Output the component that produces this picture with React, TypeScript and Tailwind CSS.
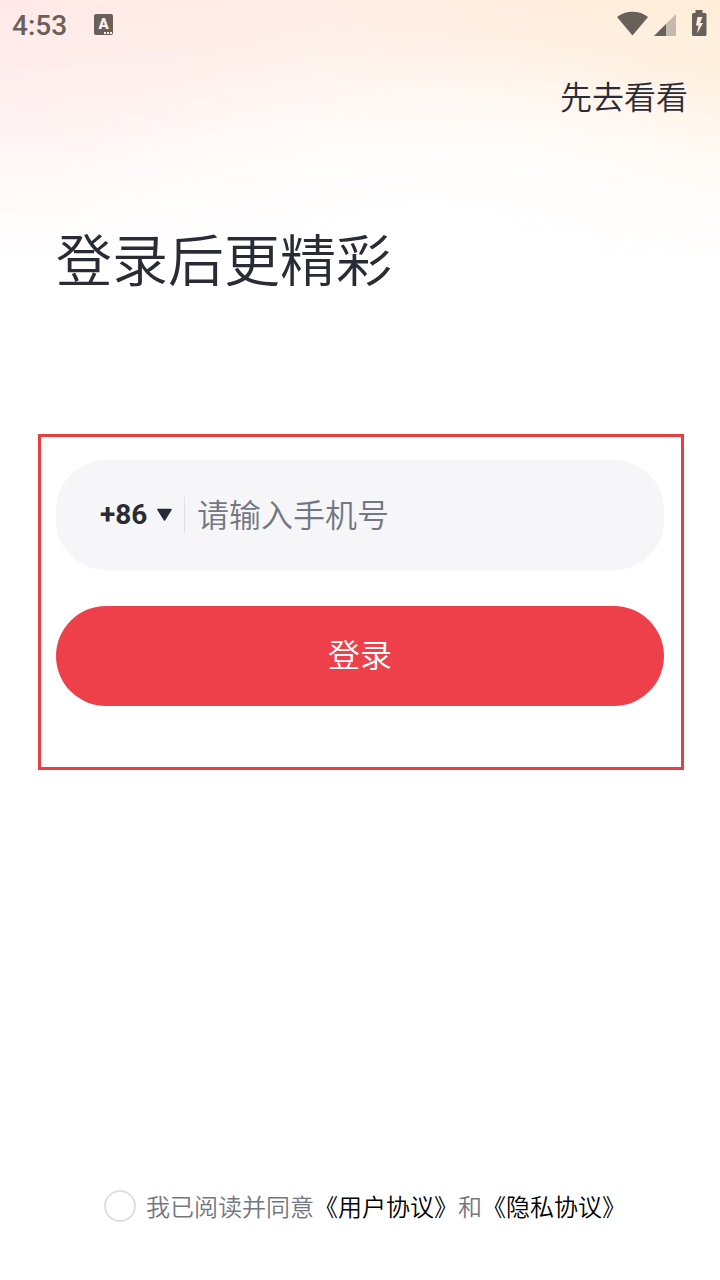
import React from "react";

const StatusBar = () => {
  return (
    <div className="flex h-12 items-center justify-between pl-3 pr-3 text-[#69605c]">
      <div className="flex items-center">
        <span className="w-[82px] pt-1 font-['Roboto'] text-[28px] leading-8 font-medium">
          4:53
        </span>
        <div className="relative flex h-[21px] w-[19px] justify-center rounded-xs bg-[#69605c]">
          <span className="font-['Roboto'] text-[15px] leading-[21px] font-black text-[#ffece8]">
            A
          </span>
          <svg className="absolute right-px bottom-px" width="8" height="2">
            <path d="M0 0h2v2H0zM3 0h2v2H3zM6 0h2v2H6z" fill="#ffece8" />
          </svg>
        </div>
      </div>
      <svg
        className="-mt-0.5"
        width="92"
        height="28"
        viewBox="0 0 92 28"
        fill="#68615a"
      >
        <path d="M1 8C9.500 1 23.500 1 32 8L16.500 26.500Z" />
        <path d="M60 5v22H38Z" fill="#c4b9ab" />
        <path d="M50 15v12H38Z" />
        <path
          fillRule="evenodd"
          d="M79.500 1h7v3H89q1.500 0 1.500 1.500v20q0 1.500-1.500 1.500H77.500q-1.500 0-1.500-1.500v-20q0-1.500 1.500-1.500h2zM81.500 8l-1.500 8.500h2.500l-1.500 8 6-10.500h-3l2.500-6z"
        />
      </svg>
    </div>
  );
};

const PhoneField = () => {
  return (
    <div className="flex h-[110px] items-center rounded-[50px] bg-[#f6f6f9] pl-11">
      <span className="font-['Roboto'] text-[28px] leading-8 font-bold text-[#292c35]">
        +86
      </span>
      <svg className="ml-[9px]" width="17" height="14" viewBox="0 0 17 14">
        <path
          d="M2 1.500h13L8.500 12Z"
          fill="#292c35"
          stroke="#292c35"
          strokeWidth="1.500"
          strokeLinejoin="round"
        />
      </svg>
      <div className="ml-[11px] h-9 w-px bg-[#dfe0e4]" />
      <input
        type="text"
        placeholder="请输入手机号"
        className="ml-[11.500px] h-12 w-[400px] pb-1 text-[32px] leading-[44px] placeholder:text-[#737781] focus:outline-0"
      />
    </div>
  );
};

const App = () => {
  return (
    <div className="h-[1280px] w-[720px] overflow-hidden bg-white bg-[radial-gradient(ellipse_420px_220px_at_430px_250px,#ffffff_0%,#ffffffcc_30%,#ffffff77_60%,#ffffff00_100%),linear-gradient(to_bottom,#ffffff00_0px,#ffffff40_80px,#ffffff99_150px,#ffffffe0_220px,#ffffff_260px),linear-gradient(to_right,#ffe9e8_0%,#ffeee7_45%,#ffeedd_85%,#ffedd8_100%)] bg-no-repeat font-['Noto_Sans_CJK_SC',sans-serif] font-[350] text-[#292c35]">
      <StatusBar />
      <div className="flex justify-end pt-[23px] pr-8">
        <button className="text-[32px] leading-[48px]">先去看看</button>
      </div>
      <h1 className="mt-[98px] ml-14 text-[56px] leading-[80px] font-[350]">
        登录后更精彩
      </h1>
      <div className="mt-[137px] ml-[38px] h-[336px] w-[646px] border-[3px] border-[#e63f42] pt-[23px] pr-[17px] pl-[15px]">
        <PhoneField />
        <button className="mt-9 h-[100px] w-full rounded-full bg-[#ed404a] pb-1.5 text-[32px] text-white">
          登录
        </button>
      </div>
      <div className="mt-[420px] ml-[104px] flex h-8 items-center text-2xl leading-8 text-[#737781]">
        <span className="mr-2.5 h-8 w-8 rounded-full border-2 border-[#dedfe5]" />
        <span>我已阅读并同意</span>
        <span className="text-black">《用户协议》</span>
        <span>和</span>
        <span className="text-black">《隐私协议》</span>
      </div>
    </div>
  );
};

export default App;
